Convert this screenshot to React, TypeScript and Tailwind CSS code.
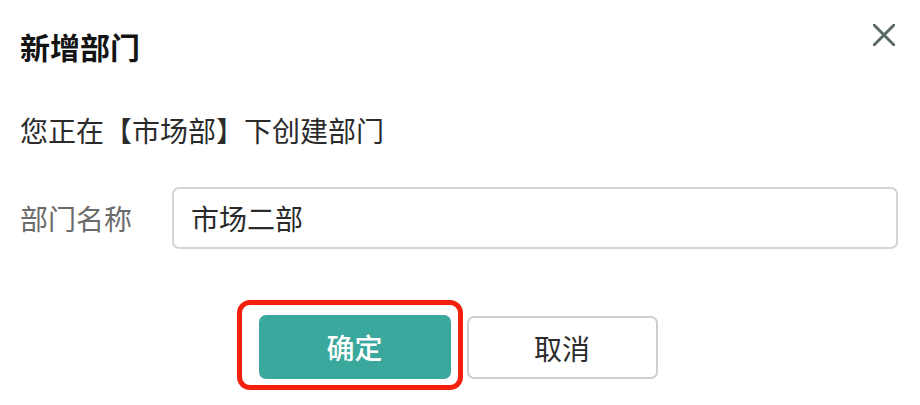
import React from "react";

export default function App() {
  return (
    <div
      className="w-[920px] h-[405px] bg-white overflow-hidden px-[20px]"
      style={{ fontFamily: '"Noto Sans CJK SC", "Noto Sans", sans-serif' }}
    >
      <div className="flex items-start justify-between pt-[24px]">
        <h1 className="mt-[7px] text-[30px] leading-[30px] font-bold text-[#141414]">新增部门</h1>
        <button className="mr-[5px] w-[22px] h-[22px] flex items-center justify-center" aria-label="关闭">
          <svg width="22" height="22" viewBox="0 0 22 22" fill="none">
            <path d="M1 1L21 21M21 1L1 21" stroke="#5a6a66" strokeWidth="3" strokeLinecap="round" />
          </svg>
        </button>
      </div>

      <p className="mt-[55px] text-[28px] leading-[28px] text-[#2b2b2b]">您正在【市场部】下创建部门</p>

      <div className="mt-[43px] flex items-center pr-[2px]">
        <label className="w-[152px] shrink-0 text-[28px] leading-[28px] text-[#6b6b6b]">部门名称</label>
        <div className="flex-1 h-[62px] border-2 border-[#d2d5d4] rounded-[7px] flex items-center px-[17px]">
          <span className="text-[28px] leading-[28px] text-[#2b2b2b]">市场二部</span>
        </div>
      </div>

      <div className="mt-[66px] flex justify-center gap-[16px] pr-[4px]">
        <div className="relative">
          <button className="w-[192px] h-[64px] rounded-[7px] bg-[#3aa89c] text-white text-[28px] leading-[28px] font-medium">
            确定
          </button>
          <div className="absolute -left-[22px] -top-[15px] -right-[12px] -bottom-[11px] border-[5px] border-[#f2200c] rounded-[13px] pointer-events-none" />
        </div>
        <button className="w-[191px] h-[63px] mt-[1px] rounded-[7px] border-2 border-[#cdd0cf] bg-white text-[#2b2b2b] text-[28px] leading-[28px]">
          取消
        </button>
      </div>
    </div>
  );
}
